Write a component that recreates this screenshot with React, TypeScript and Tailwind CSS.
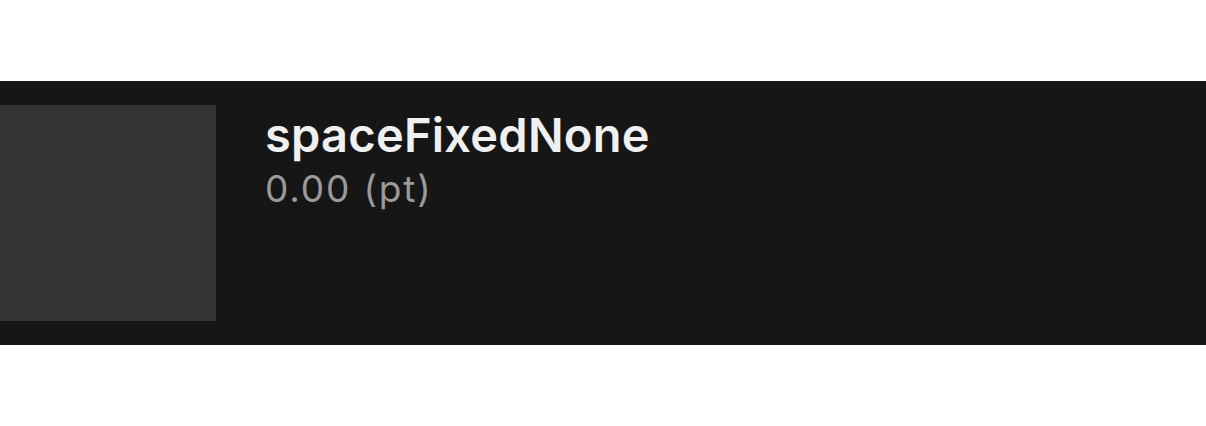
export default function App() {
  return (
    <div className="w-[1206px] h-[426px] bg-white pt-[81px]" style={{ fontFamily: 'Inter, "Noto Sans", sans-serif' }}>
      <div className="h-[264px] bg-[#161616] flex items-start py-6">
        <div className="w-[216px] h-[216px] bg-[#333333] shrink-0" />
        <div className="ml-[49px] flex flex-col mt-[2px]">
          <div className="text-[47px] leading-[56px] font-semibold tracking-[0.005em] text-[#f0f0f0]">spaceFixedNone</div>
          <div className="text-[37px] leading-[52px] tracking-[0.05em] text-[#9a9a9a]">0.00 (pt)</div>
        </div>
      </div>
    </div>
  )
}
